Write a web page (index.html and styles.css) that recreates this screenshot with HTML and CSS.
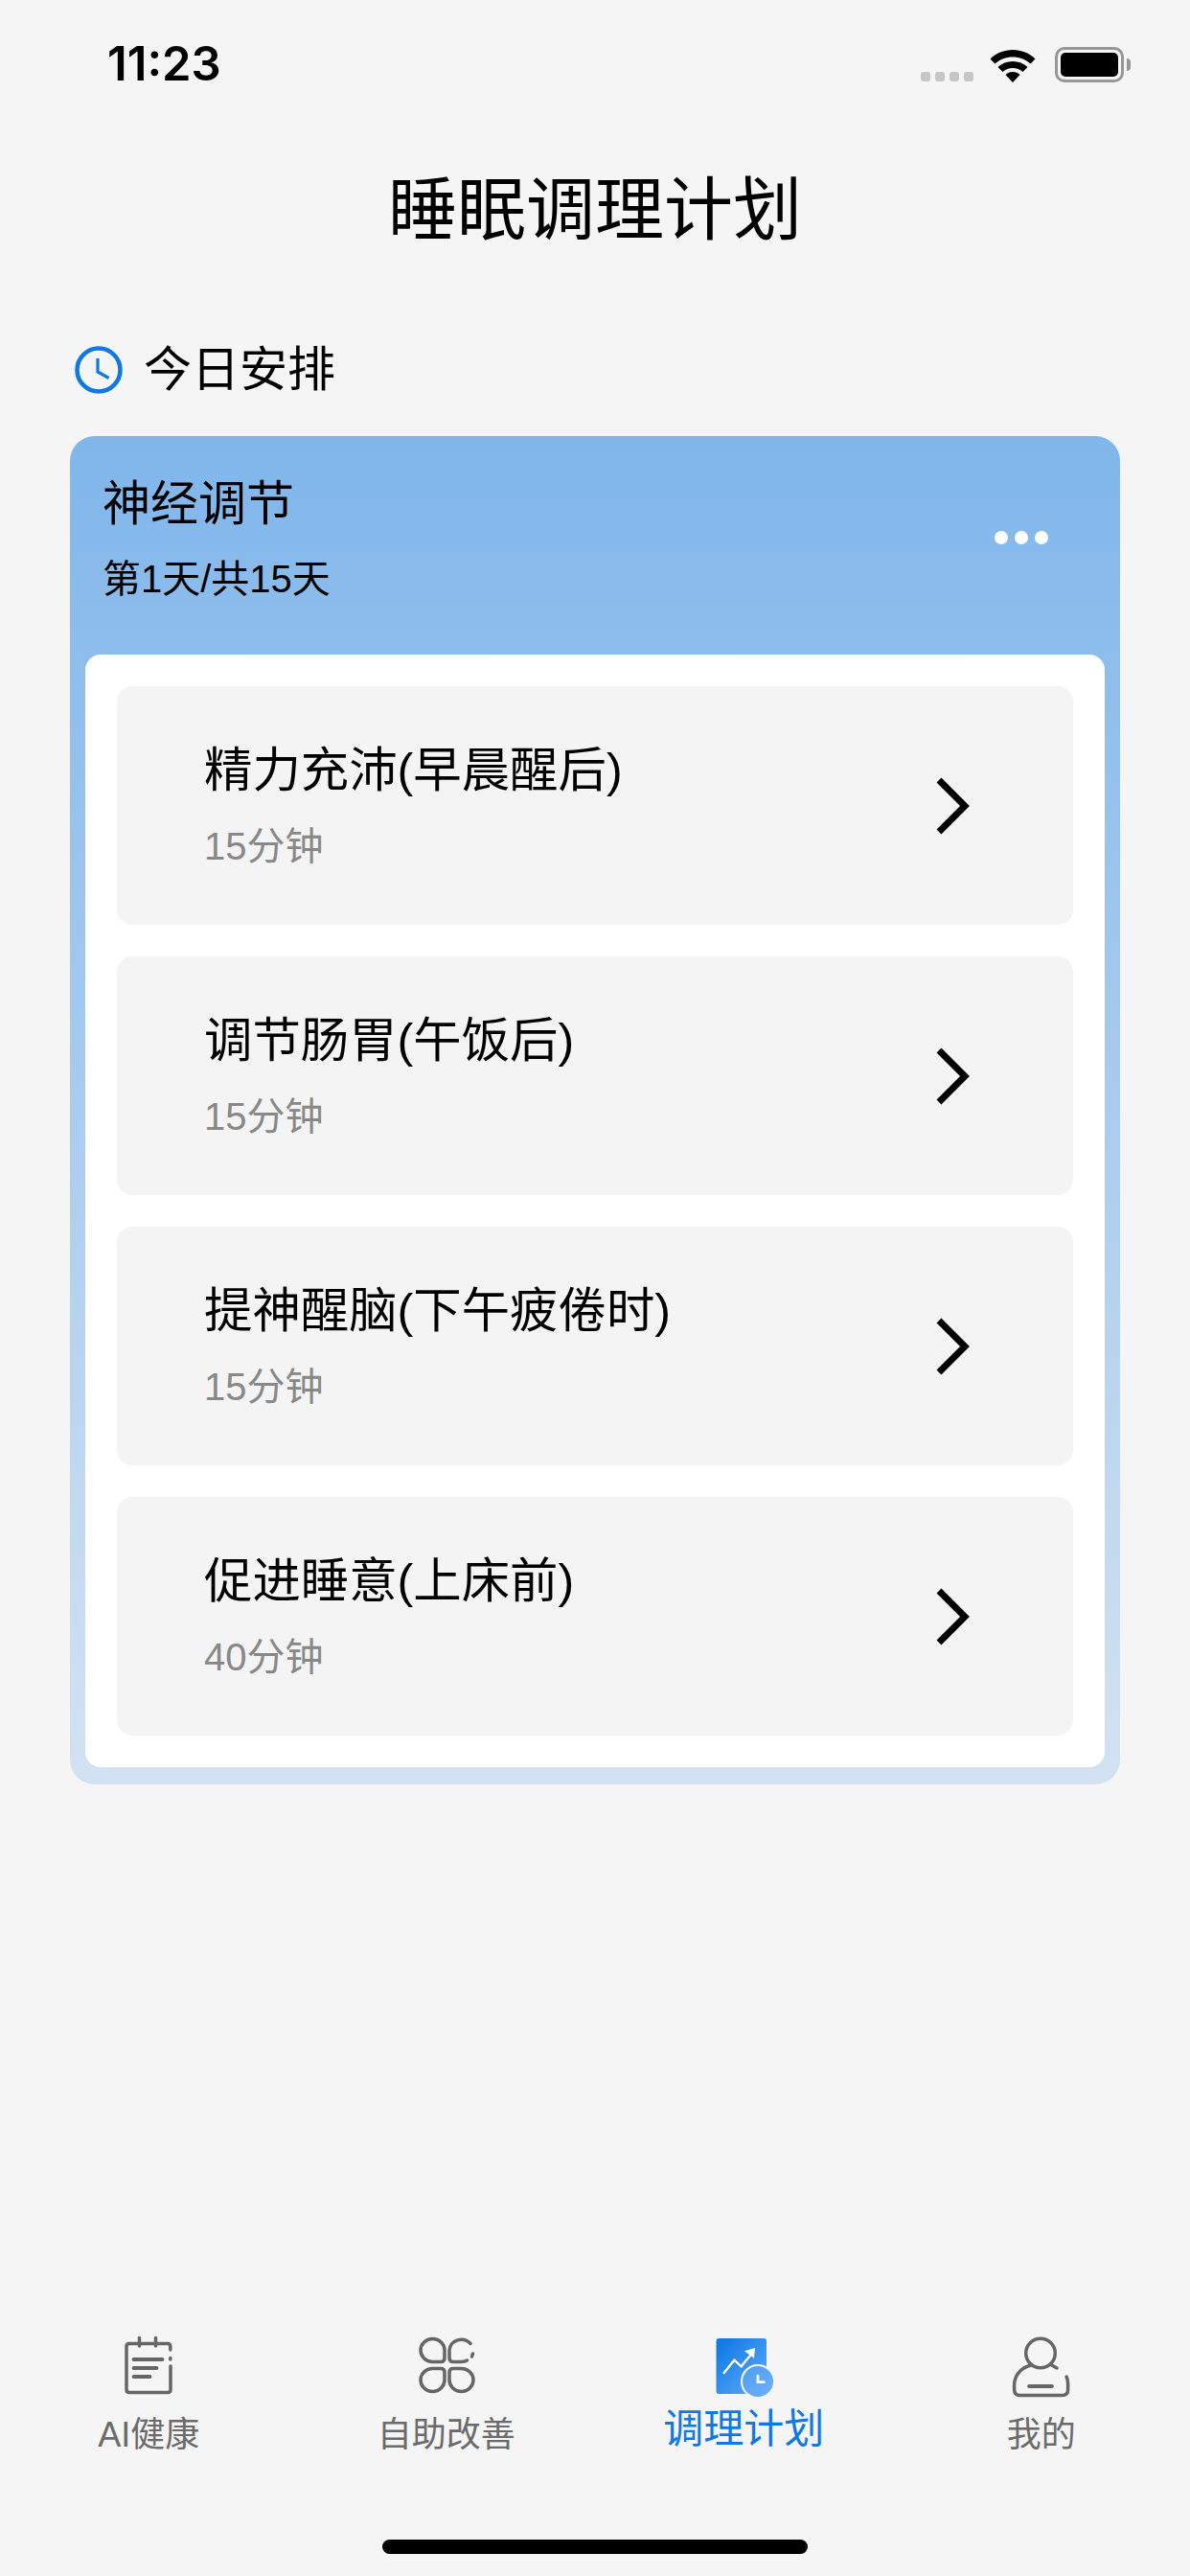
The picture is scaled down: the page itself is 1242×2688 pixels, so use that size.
FILE: index.html
```html
<!DOCTYPE html>
<html lang="zh-CN">
<head>
    <meta charset="UTF-8">
    <meta name="viewport" content="width=device-width, initial-scale=1.0">
    <title>睡眠调理计划</title>
    <link rel="stylesheet" href="styles.css">
</head>
<body>
    <!-- Status bar -->
    <div class="status-bar">
        <span class="status-time">11:23</span>
        <div class="status-icons">
            <div class="signal"><i></i><i></i><i></i><i></i></div>
            <svg class="wifi" width="48" height="36" viewBox="0 0 48 36">
                <path d="M0.5 11.5C6.5 5.5 15 2 24 2s17.5 3.5 23.5 9.5l-5 5C37.500 12 31 9.500 24 9.500S10.500 12 5.500 16.500z" fill="#000"/>
                <path d="M8.500 20C12.500 16 18 14 24 14s11.500 2 15.500 6l-5 5C31.500 22.500 28 21 24 21s-7.500 1.500-10.500 4z" fill="#000"/>
                <path d="M16.500 28c2-2 4.500-3 7.500-3s5.500 1 7.500 3L24 36z" fill="#000"/>
            </svg>
            <div class="battery"><div class="battery-fill"></div></div>
            <div class="battery-cap"></div>
        </div>
    </div>

    <h1 class="page-title">睡眠调理计划</h1>

    <!-- Today -->
    <div class="section-head">
        <svg class="clock" width="50" height="50" viewBox="0 0 50 50" fill="none" stroke="#0f79e3">
            <circle cx="25" cy="25" r="22.500" stroke-width="4.500"/>
            <path d="M24 13v14l11.500 6.500" stroke-width="3.200"/>
        </svg>
        <span class="section-title">今日安排</span>
    </div>

    <div class="plan-card">
        <div class="plan-head">
            <div>
                <div class="plan-title">神经调节</div>
                <div class="plan-days">第1天/共15天</div>
            </div>
            <div class="plan-more"><i></i><i></i><i></i></div>
        </div>
        <div class="plan-list">
            <div class="plan-item">
                <div>
                    <div class="item-title">精力充沛(早晨醒后)</div>
                    <div class="item-time">15分钟</div>
                </div>
                <svg class="chevron" width="36" height="60" viewBox="0 0 36 60" fill="none"><path d="M3 3l27 27L3 57" stroke="#000" stroke-width="7"/></svg>
            </div>
            <div class="plan-item">
                <div>
                    <div class="item-title">调节肠胃(午饭后)</div>
                    <div class="item-time">15分钟</div>
                </div>
                <svg class="chevron" width="36" height="60" viewBox="0 0 36 60" fill="none"><path d="M3 3l27 27L3 57" stroke="#000" stroke-width="7"/></svg>
            </div>
            <div class="plan-item">
                <div>
                    <div class="item-title">提神醒脑(下午疲倦时)</div>
                    <div class="item-time">15分钟</div>
                </div>
                <svg class="chevron" width="36" height="60" viewBox="0 0 36 60" fill="none"><path d="M3 3l27 27L3 57" stroke="#000" stroke-width="7"/></svg>
            </div>
            <div class="plan-item">
                <div>
                    <div class="item-title">促进睡意(上床前)</div>
                    <div class="item-time">40分钟</div>
                </div>
                <svg class="chevron" width="36" height="60" viewBox="0 0 36 60" fill="none"><path d="M3 3l27 27L3 57" stroke="#000" stroke-width="7"/></svg>
            </div>
        </div>
    </div>

    <!-- Tab bar -->
    <div class="tab-bar">
        <div class="tab">
            <svg class="tab-icon" width="60" height="60" viewBox="0 0 60 60" fill="none" stroke="#666" stroke-width="3.500" stroke-linecap="round">
                <path d="M52.800 14v-3.500q0-3-3-3H10q-3 0-3 3v45q0 3 3 3h40q3 0 3-3V31M52.800 22.500v1.500"/>
                <path d="M20.500 1.500V10M37.500 1.500V10"/>
                <path d="M14.500 24h30M14.500 33h24M14.500 42h17" stroke-width="3.800"/>
            </svg>
            <span class="tab-label">AI健康</span>
        </div>
        <div class="tab">
            <svg class="tab-icon" width="60" height="60" viewBox="0 0 60 60" fill="none" stroke="#666" stroke-width="3.500" stroke-linecap="round">
                <path d="M28 22.500v-8A12.500 11.900 0 1 0 15.500 26.400H24q4 0 4-4z"/>
                <path d="M55 7.500A12.500 11.900 0 0 0 33 14.500v8q0 4 4 4h8.500q3.500 0 6-1.500M57.500 18l-1 3"/>
                <path d="M28 37.500v8A12.500 11.900 0 1 1 15.500 33.600H24q4 0 4 4z"/>
                <path d="M33 37.500v8A12.500 11.900 0 1 0 45.500 33.600H37q-4 0-4 4z"/>
            </svg>
            <span class="tab-label">自助改善</span>
        </div>
        <div class="tab tab-active">
            <svg class="tab-icon" width="60" height="60" viewBox="0 0 60 60">
                <defs>
                    <linearGradient id="planBlue" x1="0" y1="0" x2="1" y2="1">
                        <stop offset="0.1" stop-color="#127be6"/>
                        <stop offset="1" stop-color="#62acf8"/>
                    </linearGradient>
                    <linearGradient id="clockBlue" x1="0" y1="0" x2="0.700" y2="1">
                        <stop offset="0" stop-color="#4b9df0"/>
                        <stop offset="1" stop-color="#69b0fc"/>
                    </linearGradient>
                </defs>
                <rect x="1.500" y="2" width="52.500" height="58" rx="3" fill="url(#planBlue)"/>
                <path d="M9.700 38L20.400 24.700l7.200 6.600L37 20" fill="none" stroke="#fff" stroke-width="2.400" stroke-linecap="round"/>
                <path d="M42 12L31 15.300l10 7.400z" fill="#fff"/>
                <circle cx="45" cy="47" r="17" fill="url(#clockBlue)" stroke="#f5f5f5" stroke-width="2"/>
                <path d="M45 40v7.700h7.500" fill="none" stroke="#fff" stroke-width="2.800"/>
            </svg>
            <span class="tab-label">调理计划</span>
        </div>
        <div class="tab">
            <svg class="tab-icon" width="60" height="60" viewBox="0 0 60 60" fill="none" stroke="#666" stroke-width="3.500" stroke-linecap="round">
                <circle cx="29" cy="17.500" r="15.300"/>
                <path d="M19 30C8 33 1.600 41 1.600 51v4.500q0 6 6 6h44q6 0 6-6v-6q0-4-1.500-7.500M40.700 30l5.300 3"/>
                <path d="M17 52h24" stroke-width="3.800"/>
            </svg>
            <span class="tab-label">我的</span>
        </div>
    </div>

    <div class="home-bar"></div>
</body>
</html>
```

FILE: styles.css
```css
* {
    margin: 0;
    padding: 0;
    box-sizing: border-box;
}

body {
    width: 1242px;
    height: 2688px;
    overflow: hidden;
    background: #f5f5f5;
    color: #000;
    font-family: "Liberation Sans", "Noto Sans CJK SC", sans-serif;
    display: flex;
    flex-direction: column;
}

/* Status bar */
.status-bar {
    height: 174px;
    padding: 42px 62px 0 112px;
    display: flex;
    justify-content: space-between;
    align-items: flex-start;
}

.status-time {
    font-family: "Inter", "Liberation Sans", sans-serif;
    font-size: 49px;
    line-height: 50px;
    font-weight: 600;
}

.status-icons {
    display: flex;
    align-items: center;
    padding-top: 7px;
}

.signal {
    display: flex;
    gap: 5px;
    margin: 24px 17px 0 0;
}

.signal i {
    width: 10px;
    height: 10px;
    border-radius: 3px;
    background: #c6c6c6;
}

.wifi {
    margin-right: 20px;
}

.battery {
    width: 72px;
    height: 37px;
    border: 3px solid #979797;
    border-radius: 10px;
    padding: 3px;
}

.battery-fill {
    width: 100%;
    height: 100%;
    background: #000;
    border-radius: 5px;
}

.battery-cap {
    width: 4px;
    height: 13px;
    margin-left: 3px;
    background: #979797;
    border-radius: 0 4px 4px 0;
}

.page-title {
    text-align: center;
    font-size: 72px;
    line-height: 90px;
    font-weight: 400;
}

/* Today */
.section-head {
    display: flex;
    align-items: center;
    gap: 22px;
    margin: 90px 0 0 78px;
    height: 64px;
}

.section-title {
    font-size: 50px;
    line-height: 64px;
}

/* Plan card */
.plan-card {
    margin: 37px 73px 0;
    padding: 0 16px 17px;
    height: 1407px;
    border-radius: 26px;
    background: linear-gradient(180deg, #80b6eb 0%, #d3e2f2 100%);
}

.plan-head {
    height: 228px;
    padding: 40px 59px 0 18px;
    display: flex;
    justify-content: space-between;
    align-items: flex-start;
}

.plan-title {
    font-size: 50px;
    line-height: 62px;
}

.plan-days {
    font-size: 40px;
    line-height: 54px;
    margin-top: 20px;
}

.plan-more {
    display: flex;
    gap: 7px;
    margin-top: 59px;
}

.plan-more i {
    width: 14px;
    height: 14px;
    border-radius: 50%;
    background: #fff;
}

.plan-list {
    background: #fff;
    border-radius: 16px;
    padding: 33px;
    display: flex;
    flex-direction: column;
    gap: 33px;
}

.plan-item {
    height: 249px;
    background: #f4f4f4;
    border-radius: 16px;
    padding: 0 107px 0 91px;
    display: flex;
    justify-content: space-between;
    align-items: center;
}

.item-title {
    font-size: 50.400px;
    line-height: 62px;
}

.item-time {
    font-size: 40px;
    line-height: 52px;
    margin-top: 22px;
    color: #888;
}

/* Tab bar */
.tab-bar {
    margin-top: auto;
    height: 238px;
    display: grid;
    grid-template-columns: repeat(4, 1fr);
}

.tab {
    display: flex;
    flex-direction: column;
    align-items: center;
    padding-top: 26px;
}

.tab-icon {
    overflow: visible;
}

.tab-label {
    font-size: 36px;
    line-height: 48px;
    margin-top: 19px;
    color: #6b6b6b;
}

.tab-active .tab-label {
    font-size: 42px;
    line-height: 54px;
    margin-top: 10px;
    color: #0f79e3;
}

.home-bar {
    width: 444px;
    height: 15px;
    margin: 0 auto 23px;
    border-radius: 8px;
    background: #000;
}
```
